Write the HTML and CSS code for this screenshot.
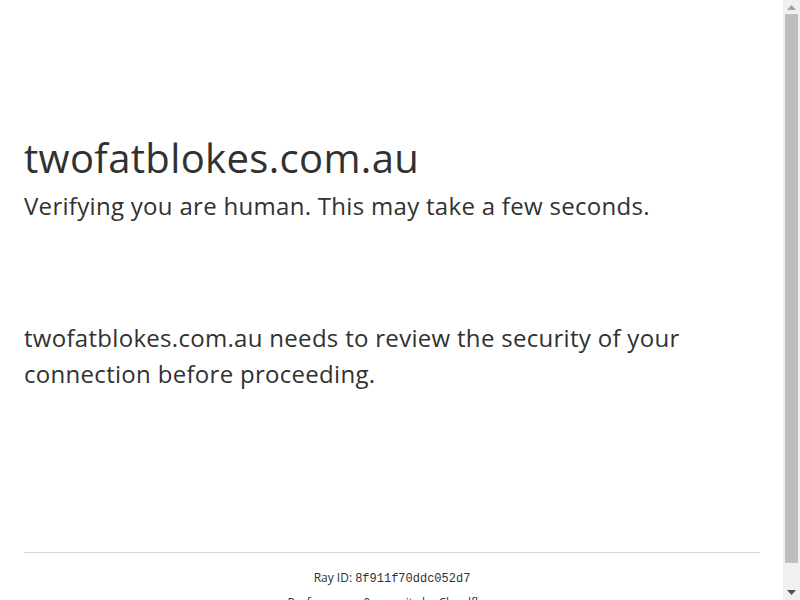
FILE: index.html
```html
<!DOCTYPE html>
<html lang="en">
<head>
<meta charset="utf-8">
<title>Just a moment...</title>
<link rel="stylesheet" href="styles.css">
</head>
<body>
<div class="main-wrapper">
  <div class="main-content">
    <h1 class="h1 zone-name">twofatblokes.com.au</h1>
    <h2 class="h2">Verifying you are human. This may take a few seconds.</h2>
    <div class="core-msg">twofatblokes.com.au needs to review the security of your connection before proceeding.</div>
  </div>
</div>
<div class="footer">
  <div class="footer-inner">
    <div class="ray-id">Ray ID: <code>8f911f70ddc052d7</code></div>
    <div class="footer-text">Performance &amp; security by <a href="#" class="cf-link">Cloudflare</a></div>
  </div>
</div>
<div class="scrollbar" aria-hidden="true">
  <div class="sb-btn">
    <svg width="9" height="5" viewBox="0 0 9 5"><path d="M4.5 0 L9 5 L0 5 Z" fill="#a3a3a3"/></svg>
  </div>
  <div class="sb-thumb"></div>
  <div class="sb-btn sb-btn-down">
    <svg width="9" height="5" viewBox="0 0 9 5"><path d="M0 0 L9 0 L4.5 5 Z" fill="#505050"/></svg>
  </div>
</div>
</body>
</html>
```
FILE: styles.css
```css
* { box-sizing: border-box; margin: 0; padding: 0; }
html { height: 100%; }
body {
  display: flex;
  flex-direction: column;
  min-height: 100%;
  margin-right: 16px;
  font-family: "Open Sans", "Liberation Sans", sans-serif;
  color: #313131;
  background: #fff;
}
.main-wrapper { display: flex; flex: 1; flex-direction: column; align-items: center; }
.main-content {
  width: 100%;
  max-width: 60rem;
  margin: 128px auto 160px;
  padding-left: 24px;
}
.h1 { font-size: 40px; font-weight: 400; line-height: 60px; letter-spacing: 0.35px; }
.h2 { font-size: 24px; font-weight: 400; line-height: 36px; letter-spacing: 0.3px; }
.core-msg { font-size: 24px; line-height: 36px; margin-top: 96px; letter-spacing: 0.3px; }
.footer {
  width: 100%;
  max-width: 60rem;
  margin: 0 auto;
  padding: 0 24px;
  font-size: 12px;
  line-height: 18px;
}
.footer-inner { border-top: 1px solid #d9d9d9; padding: 16px 0; }
.ray-id { text-align: center; }
.ray-id code { font-family: "Liberation Mono", monospace; font-size: 12px; }
.footer-text { text-align: center; margin-top: 6px; }
.cf-link { color: #313131; text-decoration: none; }

.scrollbar {
  position: fixed;
  top: 0;
  right: 0;
  width: 17px;
  height: 100%;
  background: #f0f0f0;
  display: flex;
  flex-direction: column;
  align-items: center;
}
.sb-btn {
  height: 14px;
  width: 100%;
  display: flex;
  align-items: center;
  justify-content: center;
  flex: none;
}
.sb-btn-down { height: 37px; align-items: flex-end; padding-bottom: 5px; }
.sb-thumb {
  flex: 1;
  width: 13px;
  background: #bebebe;
}
```
